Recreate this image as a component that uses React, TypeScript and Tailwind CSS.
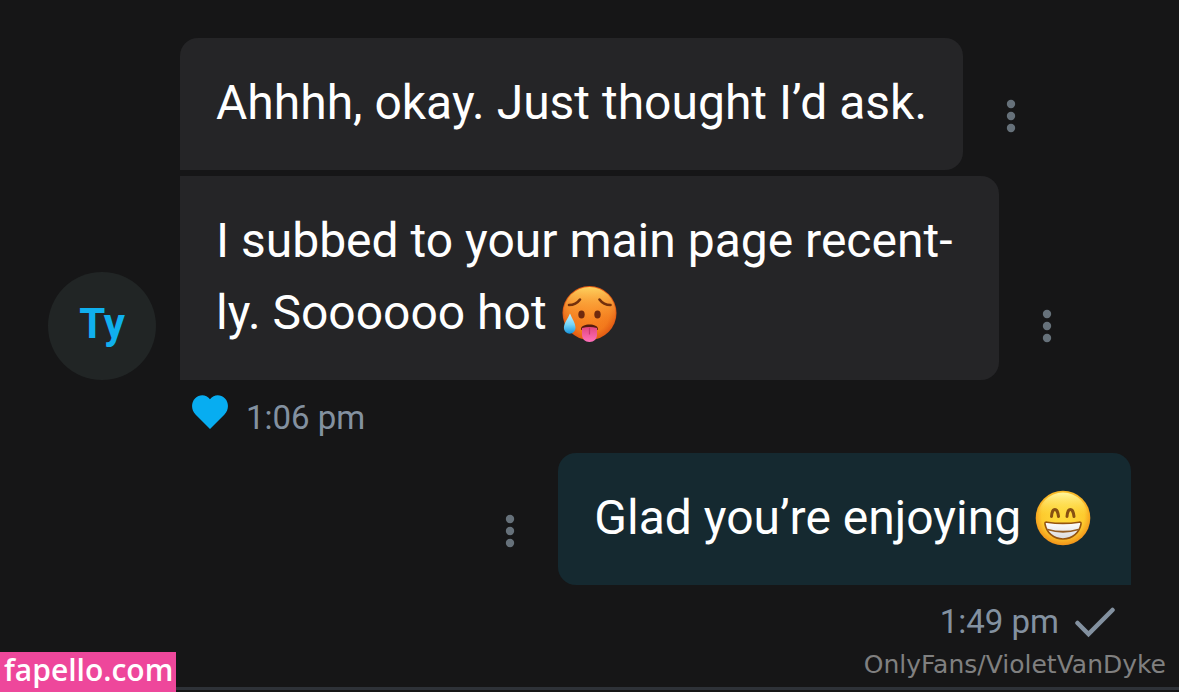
import type { ReactNode } from "react";

function MoreButton({ label }: { label: string }) {
  return (
    <button type="button" aria-label={label} className="mb-8 flex w-6 shrink-0 justify-center">
      <svg viewBox="0 0 24 44" className="h-11 w-6" fill="#66717a" aria-hidden="true">
        <circle cx="12" cy="10" r="4.2" />
        <circle cx="12" cy="22" r="4.2" />
        <circle cx="12" cy="34" r="4.2" />
      </svg>
    </button>
  );
}

function HotFace() {
  return (
    <svg viewBox="0 0 56 58" className="mr-1 ml-0.5 inline-block h-[58px] w-14 align-[-14px]" role="img" aria-label="Hot face">
      <defs>
        <radialGradient id="hot" cx="0.5" cy="0.5" r="0.52">
          <stop offset="0" stopColor="#f98a24" />
          <stop offset="0.7" stopColor="#f37a1c" />
          <stop offset="1" stopColor="#df5512" />
        </radialGradient>
        <linearGradient id="hotTop" x1="0" y1="0" x2="0" y2="1">
          <stop offset="0" stopColor="#ffd45f" />
          <stop offset="0.5" stopColor="#fba037" stopOpacity="0.35" />
          <stop offset="0.8" stopColor="#f06a18" stopOpacity="0" />
        </linearGradient>
        <linearGradient id="drop" x1="0" y1="0" x2="0" y2="1">
          <stop offset="0" stopColor="#c8f4ff" />
          <stop offset="0.55" stopColor="#74d4f7" />
          <stop offset="1" stopColor="#1593dc" />
        </linearGradient>
        <linearGradient id="tongue" x1="0" y1="0" x2="0" y2="1">
          <stop offset="0" stopColor="#e2477f" />
          <stop offset="1" stopColor="#ff70ba" />
        </linearGradient>
      </defs>
      <circle cx="28.5" cy="28" r="27" fill="url(#hot)" />
      <circle cx="28.5" cy="28" r="26" fill="url(#hotTop)" />
      <path d="M8 20q7 0 11-5.500" stroke="#73300c" strokeWidth="2.600" fill="none" strokeLinecap="round" />
      <path d="M38.500 14.500q4 5.500 11 5.500" stroke="#73300c" strokeWidth="2.600" fill="none" strokeLinecap="round" />
      <ellipse cx="20.500" cy="29.500" rx="3.200" ry="4" fill="#6f2a0e" />
      <ellipse cx="36.500" cy="29.500" rx="3.200" ry="4" fill="#6f2a0e" />
      <path d="M20 44c0-3 4-4.500 8.500-4.500S37 41 37 44c0 1.500-2 1-3.500 1h-10C22 45 20 45.500 20 44Z" fill="#551c0e" />
      <path d="M21 43q7.500-2 15 0v6.500c0 4.500-3 7.500-7.500 7.500S21 54 21 49.500Z" fill="url(#tongue)" />
      <path d="M28.500 43v6" stroke="#c93672" strokeWidth="1.200" strokeLinecap="round" />
      <path d="M9 28.500c2 5 5.500 9.500 5.500 14.500a5.800 5.800 0 0 1-11.600 0C2.900 38 7 33.500 9 28.500Z" fill="url(#drop)" />
    </svg>
  );
}

function BeamingFace() {
  return (
    <svg viewBox="0 0 56 58" className="mr-1 ml-0.5 inline-block h-[58px] w-14 align-[-14px]" role="img" aria-label="Beaming face">
      <defs>
        <radialGradient id="beam" cx="0.5" cy="0.45" r="0.56">
          <stop offset="0" stopColor="#ffdc3d" />
          <stop offset="0.7" stopColor="#fdca2e" />
          <stop offset="1" stopColor="#f08e17" />
        </radialGradient>
        <linearGradient id="beamTop" x1="0" y1="0" x2="0" y2="1">
          <stop offset="0" stopColor="#fff7a0" />
          <stop offset="0.45" stopColor="#ffe14d" stopOpacity="0" />
        </linearGradient>
        <linearGradient id="teeth" x1="0" y1="0" x2="0" y2="1">
          <stop offset="0" stopColor="#ffffff" />
          <stop offset="1" stopColor="#d9d9dc" />
        </linearGradient>
      </defs>
      <circle cx="28" cy="28" r="27.300" fill="url(#beam)" />
      <circle cx="28" cy="27.500" r="25" fill="url(#beamTop)" />
      <path d="M16.500 26.500c.7-9.500 6-9.500 7 0M32 26.500c.7-9.500 6-9.500 7 0" stroke="#875012" strokeWidth="3" fill="none" strokeLinecap="round" />
      <path d="M10 34c-.3-1.500.5-2 2-1.800 10.500 1.600 21.500 1.600 32 0 1.500-.2 2.300.3 2 1.800-1.500 8.500-8.500 15-18 15S11.500 42.500 10 34Z" fill="url(#teeth)" stroke="#95540f" strokeWidth="1.600" />
      <path d="M12.500 39.500q15.500 4.500 31 0" stroke="#955d23" strokeWidth="1.800" fill="none" />
    </svg>
  );
}

function Bubble({ children, className }: { children: ReactNode; className: string }) {
  return (
    <p className={`max-w-[819px] px-9 pt-[29px] pb-[31px] text-5xl leading-[72px] text-white ${className}`}>
      {children}
    </p>
  );
}

export default function App() {
  return (
    <main className="relative flex min-h-screen flex-col bg-[#161617] pt-[38px] font-['Roboto',sans-serif]">
      <section className="flex items-end gap-6 pl-12">
        <div className="flex size-[108px] shrink-0 items-center justify-center rounded-full bg-[#212525] pb-1 text-[42px] leading-none font-bold text-[#10b0ee]">
          Ty
        </div>
        <div className="flex min-w-0 flex-1 flex-col gap-1.5">
          <div className="flex items-end gap-9">
            <Bubble className="rounded-t-[18px] rounded-br-[18px] bg-[#252527]">
              Ahhhh, okay. Just thought I’d ask.
            </Bubble>
            <MoreButton label="Options for first message" />
          </div>
          <div className="flex items-end gap-9">
            <Bubble className="rounded-r-[18px] bg-[#252527]">
              I subbed to your main page recent-ly. Soooooo hot <HotFace />
            </Bubble>
            <MoreButton label="Options for second message" />
          </div>
        </div>
      </section>

      <div className="flex h-[73px] items-center pt-0.5 pl-48 text-[#8391a0]">
        <svg viewBox="0 0 36 34" className="mb-3 h-[34px] w-9" fill="#07adf1" role="img" aria-label="Liked">
          <path d="M18 34 3.500 19.500C-1 15-1 7.500 3 3.500 7.500-1 14-.8 18 4.200 22-.8 28.500-1 33 3.500c4 4 4 11.500-.5 16Z" />
        </svg>
        <time className="ml-[18px] text-[33px] leading-10">1:06 pm</time>
      </div>

      <section className="flex flex-col items-end pr-12">
        <div className="flex items-end gap-9">
          <MoreButton label="Options for your message" />
          <Bubble className="rounded-t-[18px] rounded-bl-[18px] bg-[#152930]">
            Glad you’re enjoying <BeamingFace />
          </Bubble>
        </div>
        <div className="mt-[17px] flex items-center gap-4 pr-4 text-[#8391a0]">
          <time className="text-[33px] leading-10">1:49 pm</time>
          <svg viewBox="0 0 40 32" className="h-8 w-10" fill="none" stroke="currentColor" strokeWidth="4.500" strokeLinecap="round" strokeLinejoin="miter" role="img" aria-label="Sent">
            <path d="m2.500 17 11 11L37.500 4" />
          </svg>
        </div>
      </section>

      <footer className="absolute inset-x-0 bottom-0 flex items-end justify-between">
        <a href="#site" className="z-10 flex h-10 w-44 items-center bg-[#ee479b] pb-1 pl-1 font-['Open_Sans',sans-serif] text-[30px] leading-9 font-semibold text-white">
          fapello.com
        </a>
        <p className="pr-[13px] pb-[13px] font-['DejaVu_Sans',sans-serif] text-[25px] leading-7 text-[#808080]">
          OnlyFans/VioletVanDyke
        </p>
        <div className="absolute inset-x-0 bottom-0 h-[5px] border-t-[3px] border-[#2e3238]" />
      </footer>
    </main>
  );
}
